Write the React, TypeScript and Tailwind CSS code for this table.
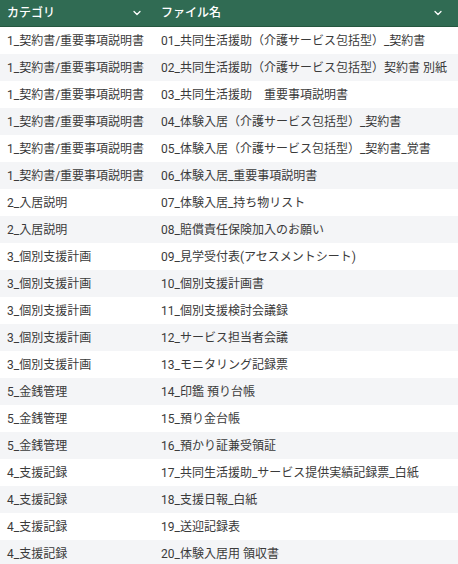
import { ChevronDown } from "lucide-react"

const rows: [string, string][] = [
  ["1_契約書/重要事項説明書", "01_共同生活援助（介護サービス包括型）_契約書"],
  ["1_契約書/重要事項説明書", "02_共同生活援助（介護サービス包括型）契約書 別紙"],
  ["1_契約書/重要事項説明書", "03_共同生活援助　重要事項説明書"],
  ["1_契約書/重要事項説明書", "04_体験入居（介護サービス包括型）_契約書"],
  ["1_契約書/重要事項説明書", "05_体験入居（介護サービス包括型）_契約書_覚書"],
  ["1_契約書/重要事項説明書", "06_体験入居_重要事項説明書"],
  ["2_入居説明", "07_体験入居_持ち物リスト"],
  ["2_入居説明", "08_賠償責任保険加入のお願い"],
  ["3_個別支援計画", "09_見学受付表(アセスメントシート)"],
  ["3_個別支援計画", "10_個別支援計画書"],
  ["3_個別支援計画", "11_個別支援検討会議録"],
  ["3_個別支援計画", "12_サービス担当者会議"],
  ["3_個別支援計画", "13_モニタリング記録票"],
  ["5_金銭管理", "14_印鑑 預り台帳"],
  ["5_金銭管理", "15_預り金台帳"],
  ["5_金銭管理", "16_預かり証兼受領証"],
  ["4_支援記録", "17_共同生活援助_サービス提供実績記録票_白紙"],
  ["4_支援記録", "18_支援日報_白紙"],
  ["4_支援記録", "19_送迎記録表"],
  ["4_支援記録", "20_体験入居用 領収書"],
]

export default function App() {
  return (
    <div
      className="w-[458px] h-[564px] overflow-hidden bg-white text-[12px] text-[#3a3a3a]"
      style={{ fontFamily: 'Roboto, "Noto Sans CJK JP", sans-serif' }}
    >
      {/* Header */}
      <div className="grid grid-cols-[154px_1fr] h-[27px] bg-[#306b53] border-b border-[#25573f] text-white font-medium">
        <div className="flex items-center justify-between pl-[7px] pr-[11px]">
          <span>カテゴリ</span>
          <ChevronDown size={12} strokeWidth={2.5} />
        </div>
        <div className="flex items-center justify-between pl-[7px] pr-[14px]">
          <span>ファイル名</span>
          <ChevronDown size={12} strokeWidth={2.5} />
        </div>
      </div>

      {/* Rows */}
      {rows.map(([category, file], i) => (
        <div
          key={i}
          className={`grid grid-cols-[154px_1fr] h-[27px] items-center ${
            i % 2 === 0 ? "bg-white" : "bg-[#f4f5f7]"
          }`}
        >
          <div className="pl-[7px] whitespace-nowrap">{category}</div>
          <div className="pl-[7px] whitespace-nowrap">{file}</div>
        </div>
      ))}
    </div>
  )
}
